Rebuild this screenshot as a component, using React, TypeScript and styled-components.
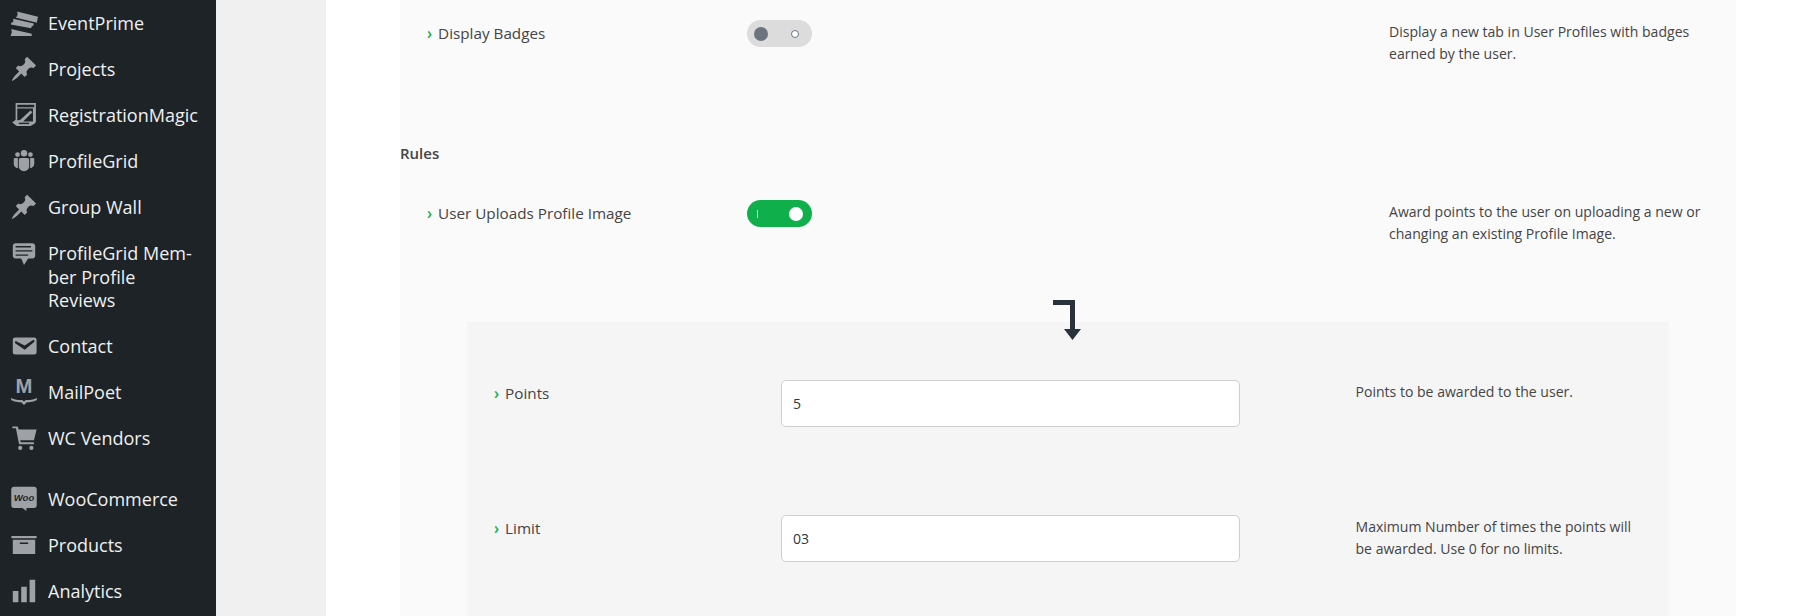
import React from "react";
import styled, { createGlobalStyle } from "styled-components";

const GlobalStyle = createGlobalStyle`
  html, body {
    margin: 0;
    padding: 0;
    background: #fff;
    overflow: hidden;
  }
  * {
    box-sizing: border-box;
  }
`;

const PIN =
  "M10.44 3.02l1.82-1.82 6.36 6.35-1.83 1.82c-1.05-.68-2.48-.57-3.41.36l-.75.75c-.92.93-1.04 2.35-.35 3.41l-1.83 1.82-2.41-2.41-2.8 2.79c-.42.42-3.38 2.71-3.8 2.29s1.86-3.39 2.28-3.81l2.79-2.79L4.1 9.36l1.83-1.82c1.05.69 2.48.57 3.4-.36l.75-.75c.93-.92 1.05-2.35.36-3.41z";

const icons: Record<string, React.ReactNode> = {
  tickets: (
    <>
      <path d="M5 1.800l15 3.800-.9 4.200-1.100-.3-12.700-3-1.400-.4c.8-.4 1.300-1 1.400-1.800.1-.9.100-1.700-.3-2.500z" />
      <path d="M2.200 6.900l14.800 3.500-.3 1.500c-.7 0-1.200.4-1.400 1l-.2.8L.6 11.100l.4-1.500c.7 0 1.300-.4 1.400-1.100z" />
      <path d="M1 14.300l3.500.8 11 2.500v1.600H.4l.6-1.900c.4-.6.400-1.400 0-2z" />
    </>
  ),
  pin: <path d={PIN} />,
  form: (
    <>
      <path d="M4 1.500h14.500v13.200c0 .6-.3 1-.8 1.300l-3 1.900H4.800l-3.200-2.600L4 13.400zM5.200 2.700v1.700h12.100V2.700zM5.200 5.400v8.400l2-.2 7.400-6.900 1.400 1.400-6.600 6.600h7V5.400z" fillRule="evenodd" />
      <path d="M6.300 15.500h7.400v1H6.300z" fill="#1d2327" />
    </>
  ),
  group: (
    <>
      <circle cx="10" cy="4.400" r="2.300" />
      <circle cx="5.400" cy="5.400" r="1.700" />
      <circle cx="14.600" cy="5.400" r="1.700" />
      <path d="M7.600 7.800h4.800c.7 0 1.300.6 1.300 1.300v4.700c0 2-1.700 3.500-3.700 3.500s-3.700-1.500-3.700-3.500V9.100c0-.7.600-1.300 1.300-1.300z" />
      <path d="M3.500 7.800h2.100v6c0 .5.100.9.200 1.300-1.900-.3-3.100-1.500-3.100-3V8.700c0-.5.300-.9.800-.9z" />
      <path d="M14.400 7.800h2.100c.5 0 .8.400.8.9v3.400c0 1.500-1.200 2.700-3.100 3 .1-.4.200-.8.200-1.300z" />
    </>
  ),
  comment: (
    <path d="M4 3h12c.55 0 1.020.2 1.410.59S18 4.450 18 5v7c0 .55-.2 1.020-.59 1.410S16.550 14 16 14h-3l-3 4.500L8 14H4c-.55 0-1.020-.2-1.410-.59S2 12.550 2 12V5c0-.55.2-1.020.59-1.410S3.450 3 4 3zm11 2H4v1h11V5zm1 3H4v1h12V8zm-3 3H4v1h9v-1z" fillRule="evenodd" />
  ),
  mail: (
    <path d="M3.870 4h13.250C18.370 4 19 4.590 19 5.790v8.420c0 1.190-.630 1.790-1.880 1.790H3.870c-1.250 0-1.880-.600-1.880-1.790V5.790c0-1.200.630-1.790 1.880-1.790zm6.620 8.600l6.740-5.530c.240-.200.430-.660.130-1.070-.290-.410-.820-.420-1.170-.170l-5.700 3.860L4.800 6.830c-.350-.250-.880-.240-1.170.170-.300.410-.110.870.130 1.070z" />
  ),
  mailpoet: (
    <>
      <text x="10" y="10.800" textAnchor="middle" fontFamily="Liberation Sans" fontWeight="700" fontSize="14.500">
        M
      </text>
      <path d="M.8 14.200c2.800 1.400 5.600 1.600 7.900 1.500L10 16.700l1.300-1c2.300.1 5.100-.1 7.900-1.500v1.500c-2.400 1.300-4.900 1.700-7.200 1.700L10 19.200l-2-1.800c-2.300 0-4.800-.4-7.200-1.700z" />
    </>
  ),
  cart: (
    <>
      <path d="M1.700 1.700h3.800l.7 2.300H19l-1.900 7.600H7.300l.4 1.500h9.400v1.400H6.500L4.200 3.100H1.700z" />
      <circle cx="7.300" cy="17.100" r="1.500" />
      <circle cx="15.300" cy="17.100" r="1.500" />
    </>
  ),
  woo: (
    <>
      <path d="M2.700 1.300h14.600c1 0 1.800.8 1.800 1.800v11.600c0 1-.8 1.800-1.800 1.800h-5.600l.1 2-3-2H2.700c-1 0-1.800-.8-1.800-1.800V3.100c0-1 .8-1.800 1.800-1.800z" />
      <text x="10" y="11.200" textAnchor="middle" fontFamily="Liberation Sans" fontStyle="italic" fontWeight="700" fontSize="6.800" fill="#1d2327">
        Woo
      </text>
    </>
  ),
  archive: <path d="M19 3.600v1.600H1V3.600h18zM2 6.200h16v10.300H2V6.200zm11 3v-1H7v1h6z" fillRule="evenodd" />,
  bars: <path d="M18 18V2h-4v16h4zm-6 0V7H8v11h4zm-6 0v-8H2v8h4z" />,
};

const menu = [
  { icon: "tickets", label: "EventPrime" },
  { icon: "pin", label: "Projects" },
  { icon: "form", label: "RegistrationMagic" },
  { icon: "group", label: "ProfileGrid" },
  { icon: "pin", label: "Group Wall" },
  { icon: "comment", label: "ProfileGrid Mem-\nber Profile\nReviews" },
  { icon: "mail", label: "Contact" },
  { icon: "mailpoet", label: "MailPoet" },
  { icon: "cart", label: "WC Vendors" },
  { icon: "woo", label: "WooCommerce", gap: true },
  { icon: "archive", label: "Products" },
  { icon: "bars", label: "Analytics" },
];

const Page = styled.div`
  display: flex;
  width: 1796px;
  height: 616px;
  overflow: hidden;
  font-family: "Open Sans", "Noto Sans", sans-serif;
`;

const Sidebar = styled.nav`
  flex: 0 0 216px;
  padding-top: 1px;
  background: #1d2327;
`;

const MenuItem = styled.div<{ $gap?: boolean }>`
  display: flex;
  align-items: flex-start;
  gap: 10px;
  padding: 11.17px 0 11.17px 10px;
  margin-top: ${(p) => (p.$gap ? "15px" : "0")};
  color: #f0f0f0;
  font-size: 18px;
  line-height: 23.67px;
  white-space: pre-line;
`;

const MenuIcon = styled.svg`
  flex: 0 0 28px;
  width: 28px;
  height: 28px;
  margin: -3px 0 -2px;
  overflow: visible;
  fill: #9ea2a6;
`;

const Gutter = styled.div`
  flex: 0 0 110px;
  background: #f0f0f0;
`;

const Main = styled.main`
  flex: 1;
  padding: 0 60px 0 74px;
  background: #fff;
`;

const Panel = styled.section`
  height: 100%;
  padding-top: 20px;
  background: #fafafa;
  color: #444;
  font-size: 14px;
`;

const SettingRow = styled.div`
  display: grid;
  grid-template-columns: 347px 642px 325px;
`;

const Label = styled.div<{ $inset: number }>`
  display: flex;
  gap: 6px;
  padding-left: ${(p) => p.$inset}px;
  font-size: 15.25px;
  line-height: 27px;
`;

const Chevron = styled.span`
  color: #10b04c;
  font-weight: 600;
`;

const Toggle = styled.div<{ $on?: boolean }>`
  display: flex;
  align-items: center;
  justify-content: space-between;
  width: 65px;
  height: 27px;
  padding: ${(p) => (p.$on ? "0 9px 0 10px" : "0 13px 0 7px")};
  border-radius: 14px;
  background: ${(p) => (p.$on ? "#0fb04c" : "#dcdcdc")};
`;

const Knob = styled.span<{ $on?: boolean }>`
  width: 14px;
  height: 14px;
  border-radius: 50%;
  background: ${(p) => (p.$on ? "#fff" : "#6c757d")};
`;

const OffMark = styled.span`
  width: 8px;
  height: 8px;
  border: 1px solid #6c757d;
  border-radius: 50%;
  background: #fff;
`;

const OnMark = styled.span`
  width: 1px;
  height: 8px;
  background: #fff;
`;

const Description = styled.p<{ $width?: number }>`
  margin: 1px 0 0;
  width: ${(p) => p.$width ?? 325}px;
  font-size: 14.05px;
  line-height: 22px;
`;

const SectionTitle = styled.h3`
  margin: 76px 0 35px;
  font-size: 15px;
  font-weight: 600;
  line-height: 24px;
`;

const Nested = styled.div`
  position: relative;
  margin: 77px 67px 0;
  padding-top: 58px;
  height: 320px;
  background: #f5f5f5;
`;

const FlowArrow = styled.svg`
  position: absolute;
  left: 585px;
  top: -22px;
  width: 30px;
  height: 40px;
  fill: #29323a;
`;

const NestedRow = styled.div`
  display: grid;
  grid-template-columns: 314px 574.5px 290px;
  height: 135px;
`;

const ValueInput = styled.input`
  width: 459px;
  height: 47px;
  padding: 0 11px;
  border: 1px solid #cfcfcf;
  border-radius: 5px;
  background: #fff;
  color: #32373c;
  font-family: inherit;
  font-size: 14px;
`;

function Setting({ label, on, text }: { label: string; on?: boolean; text: string }) {
  return (
    <SettingRow>
      <Label $inset={27}>
        <Chevron>›</Chevron>
        {label}
      </Label>
      <div>
        <Toggle $on={on}>
          {on ? <OnMark /> : <Knob />}
          {on ? <Knob $on /> : <OffMark />}
        </Toggle>
      </div>
      <Description>{text}</Description>
    </SettingRow>
  );
}

function NestedSetting({ label, value, text }: { label: string; value: string; text: string }) {
  return (
    <NestedRow>
      <Label $inset={27}>
        <Chevron>›</Chevron>
        {label}
      </Label>
      <div>
        <ValueInput defaultValue={value} />
      </div>
      <Description $width={290}>{text}</Description>
    </NestedRow>
  );
}

export default function App() {
  return (
    <Page>
      <GlobalStyle />
      <Sidebar>
        {menu.map((item) => (
          <MenuItem key={item.label} $gap={item.gap}>
            <MenuIcon viewBox="0 0 20 20">{icons[item.icon]}</MenuIcon>
            <span>{item.label}</span>
          </MenuItem>
        ))}
      </Sidebar>
      <Gutter />
      <Main>
        <Panel>
          <Setting
            label="Display Badges"
            text="Display a new tab in User Profiles with badges earned by the user."
          />
          <SectionTitle>Rules</SectionTitle>
          <Setting
            label="User Uploads Profile Image"
            on
            text="Award points to the user on uploading a new or changing an existing Profile Image."
          />
          <Nested>
            <FlowArrow viewBox="0 0 30 40">
              <path d="M1 0h22v29h6L20.500 40 12 29h6V5H1z" />
            </FlowArrow>
            <NestedSetting label="Points" value="5" text="Points to be awarded to the user." />
            <NestedSetting
              label="Limit"
              value="03"
              text="Maximum Number of times the points will be awarded. Use 0 for no limits."
            />
          </Nested>
        </Panel>
      </Main>
    </Page>
  );
}
